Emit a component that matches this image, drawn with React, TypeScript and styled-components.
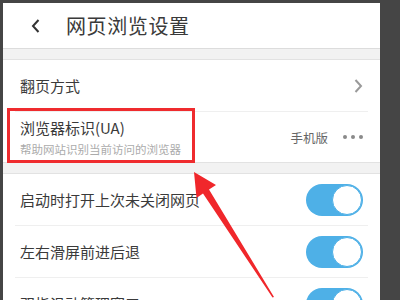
import styled, { createGlobalStyle } from 'styled-components';

const GlobalStyle = createGlobalStyle`
    html, body {
        margin:0;
        padding:0;
        background:#454545;
    }
    body {
        font-family:"Noto Sans CJK SC", "Noto Sans", sans-serif;
    }
`

const Page = styled.div`
    position:relative;
    width:400px;
    height:300px;
    overflow:hidden;
    background:#454545;
`

const Screen = styled.div`
    margin:3px 20px 0 3px;
    width:377px;
    height:297px;
    background:#f2f2f2;
    overflow:hidden;
`

const Header = styled.header`
    height:45px;
    display:flex;
    align-items:center;
    background:#fff;
    border-bottom:1px solid #dcdcdc;
    margin-bottom:10px;
`

const BackButton = styled.div`
    width:60px;
    display:flex;
    justify-content:center;
    padding-left:3px;
    svg {
        display:block;
    }
`

const Title = styled.h1`
    margin:0;
    font-size:20px;
    font-weight:400;
    color:#3a3a3a;
    letter-spacing:0.6px;
`

const Section = styled.section<{ $gap?: number }>`
    background:#fff;
    border-top:1px solid #e2e2e2;
    border-bottom:1px solid #e2e2e2;
    margin-bottom:${props => props.$gap ?? 0}px;
`

const Row = styled.div<{ $height: number }>`
    height:${props => props.$height}px;
    margin:0 12px;
    padding:0 5px;
    display:flex;
    align-items:center;
    justify-content:space-between;
    border-bottom:1px solid #efefef;
    &:last-child {
        border-bottom:none;
    }
`

const Labels = styled.div`
    display:flex;
    flex-direction:column;
`

const Label = styled.span`
    font-size:15px;
    color:#3a3a3a;
    line-height:20px;
`

const SubLabel = styled.span`
    font-size:11.5px;
    color:#ababab;
    line-height:16px;
    margin-top:3px;
`

const Extra = styled.div`
    display:flex;
    align-items:center;
    gap:15px;
`

const Value = styled.span`
    font-size:12.5px;
    color:#666;
`

const Dots = styled.div`
    display:flex;
    gap:4px;
    span {
        width:4px;
        height:4px;
        border-radius:50%;
        background:#8a8a8a;
    }
`

const Toggle = styled.div<{ $on: boolean }>`
    width:57px;
    height:32px;
    box-sizing:border-box;
    border-radius:16px;
    background:${props => props.$on ? '#4eb0e7' : '#ddd'};
    display:flex;
    justify-content:${props => props.$on ? 'flex-end' : 'flex-start'};
    align-items:center;
    padding:1px;
    span {
        width:30px;
        height:30px;
        box-sizing:border-box;
        border-radius:50%;
        background:#fff;
        border:1px solid ${props => props.$on ? '#4eb0e7' : '#ccc'};
    }
`

const Highlight = styled.div`
    position:absolute;
    left:7px;
    top:108px;
    width:188px;
    height:55px;
    box-sizing:border-box;
    border:3px solid #ef2b2e;
    pointer-events:none;
`

const Arrow = styled.svg`
    position:absolute;
    left:0;
    top:0;
    pointer-events:none;
`

const switches = [
    { label: '启动时打开上次未关闭网页', on: true },
    { label: '左右滑屏前进后退', on: true },
    { label: '双指滑动管理窗口', on: true },
]

function App() {
    return (
        <Page>
            <GlobalStyle />
            <Screen>
                <Header>
                    <BackButton>
                        <svg width="10" height="14" viewBox="0 0 10 14">
                            <path d="M7.5 1 L2 7 L7.5 13" fill="none" stroke="#333" strokeWidth="2" />
                        </svg>
                    </BackButton>
                    <Title>网页浏览设置</Title>
                </Header>

                <Section $gap={10}>
                    <Row $height={51}>
                        <Label>翻页方式</Label>
                        <svg width="9" height="14" viewBox="0 0 9 14">
                            <path d="M1.5 1 L7 7 L1.5 13" fill="none" stroke="#9a9a9a" strokeWidth="2" />
                        </svg>
                    </Row>
                    <Row $height={50}>
                        <Labels>
                            <Label>浏览器标识(UA)</Label>
                            <SubLabel>帮助网站识别当前访问的浏览器</SubLabel>
                        </Labels>
                        <Extra>
                            <Value>手机版</Value>
                            <Dots><span /><span /><span /></Dots>
                        </Extra>
                    </Row>
                </Section>

                <Section>
                    {switches.map(item =>
                        <Row $height={51} key={item.label}>
                            <Label>{item.label}</Label>
                            <Toggle $on={item.on}><span /></Toggle>
                        </Row>
                    )}
                </Section>
            </Screen>

            <Highlight />
            <Arrow width="400" height="300" viewBox="0 0 400 300">
                <polygon
                    points="194,172 216,185 209,189.5 274,297 272.5,297.5 203,193.5 196.5,198"
                    fill="#f0272b"
                />
            </Arrow>
        </Page>
    )
}

export default App;
